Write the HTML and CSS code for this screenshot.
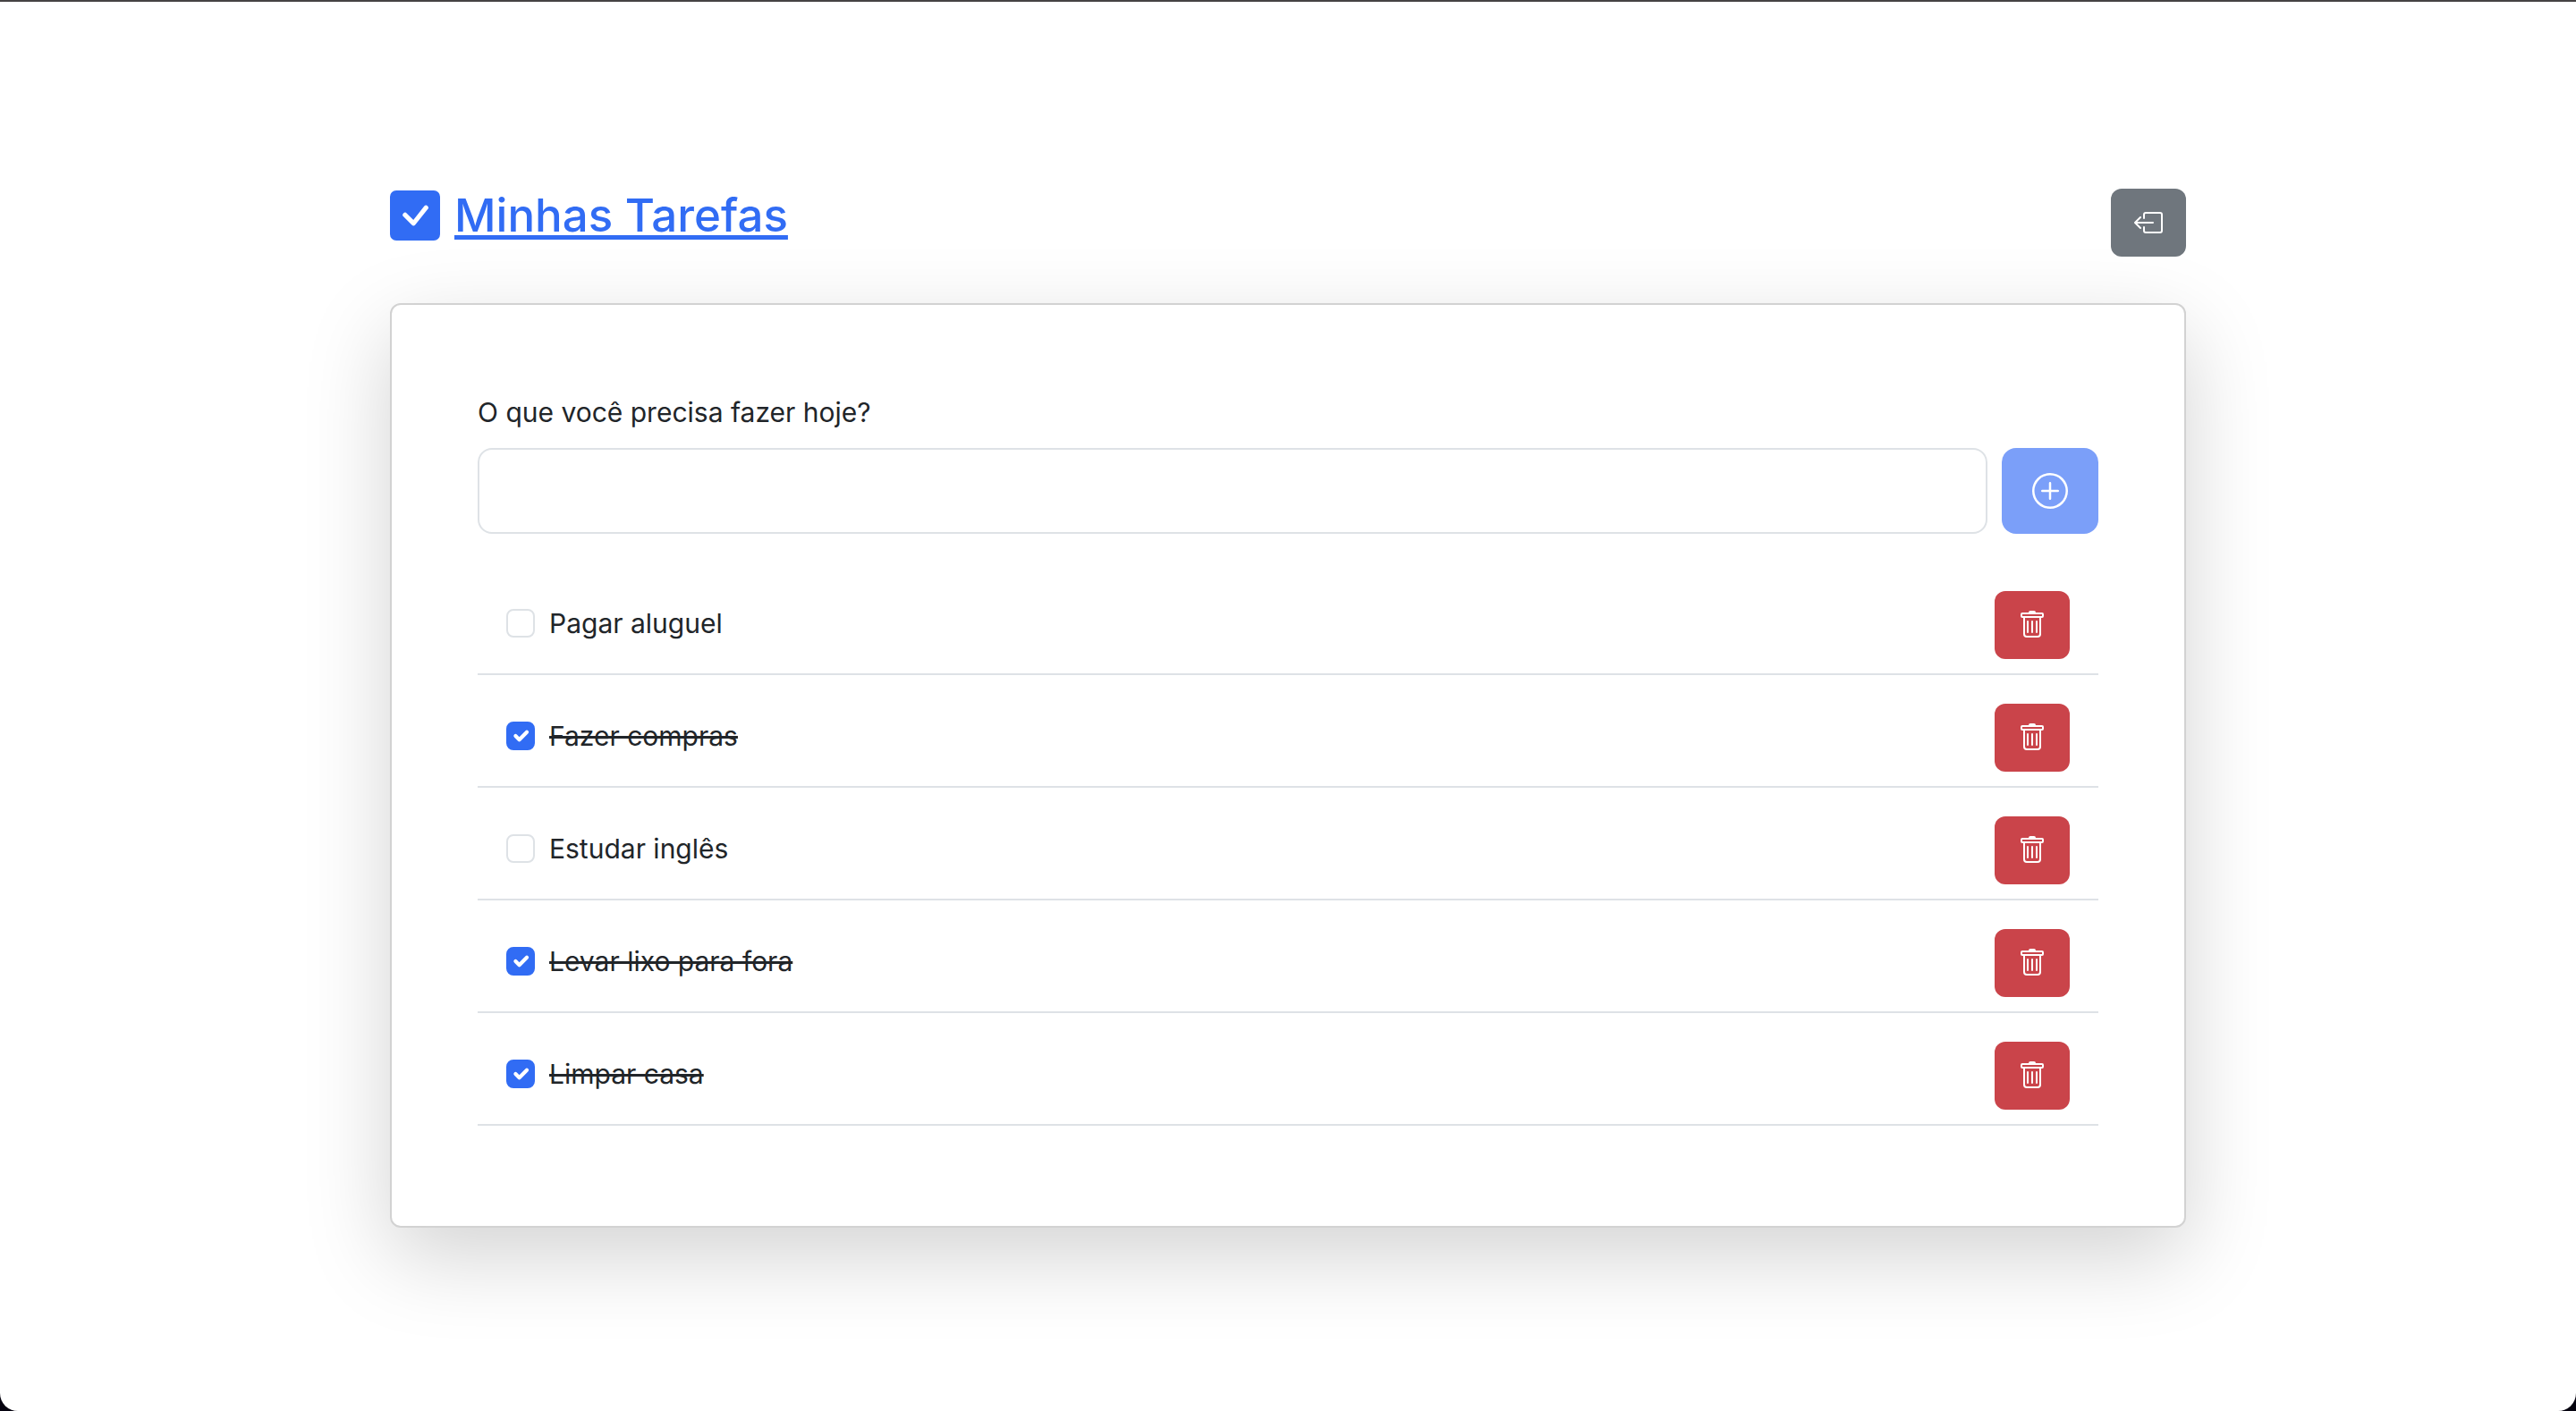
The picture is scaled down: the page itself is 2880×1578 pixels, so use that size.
FILE: index.html
```html
<!DOCTYPE html>
<html lang="pt-BR">
<head>
<meta charset="utf-8">
<title>Minhas Tarefas</title>
<meta name="viewport" content="width=device-width, initial-scale=1">
<link rel="stylesheet" href="styles.css">
</head>
<body>
<svg class="sprite" aria-hidden="true">
  <symbol id="trash" viewBox="0 0 16 16">
    <path d="M5.5 5.5A.5.5 0 0 1 6 6v6a.5.5 0 0 1-1 0V6a.5.5 0 0 1 .5-.5m2.5 0a.5.5 0 0 1 .5.5v6a.5.5 0 0 1-1 0V6a.5.5 0 0 1 .5-.5m3 .5a.5.5 0 0 0-1 0v6a.5.5 0 0 0 1 0z"/>
    <path d="M14.5 3a1 1 0 0 1-1 1H13v9a2 2 0 0 1-2 2H5a2 2 0 0 1-2-2V4h-.5a1 1 0 0 1-1-1V2a1 1 0 0 1 1-1H6a1 1 0 0 1 1-1h2a1 1 0 0 1 1 1h3.5a1 1 0 0 1 1 1zM4.118 4 4 4.059V13a1 1 0 0 0 1 1h6a1 1 0 0 0 1-1V4.059L11.882 4zM2.5 3h11V2h-11z"/>
  </symbol>
</svg>
<div class="page">
  <main class="container">
    <header class="header">
      <h1 class="title">
        <a class="title-link" href="#">
          <svg class="title-icon" viewBox="0 0 16 16" aria-hidden="true"><path d="M2 0a2 2 0 0 0-2 2v12a2 2 0 0 0 2 2h12a2 2 0 0 0 2-2V2a2 2 0 0 0-2-2zm10.03 4.97a.75.75 0 0 1 .011 1.05l-3.992 4.99a.75.75 0 0 1-1.08.02L4.324 8.384a.75.75 0 1 1 1.06-1.06l2.094 2.093 3.473-4.425a.75.75 0 0 1 1.08-.022z"/></svg>
          <span class="title-text">Minhas Tarefas</span>
        </a>
      </h1>
      <button class="btn btn-secondary" type="button" aria-label="Sair">
        <svg class="icon" viewBox="0 0 16 16" aria-hidden="true"><path fill-rule="evenodd" d="M6 12.5a.5.5 0 0 0 .5.5h8a.5.5 0 0 0 .5-.5v-9a.5.5 0 0 0-.5-.5h-8a.5.5 0 0 0-.5.5v2a.5.5 0 0 1-1 0v-2A1.5 1.5 0 0 1 6.5 2h8A1.5 1.5 0 0 1 16 3.5v9a1.5 1.5 0 0 1-1.5 1.5h-8A1.5 1.5 0 0 1 5 12.5v-2a.5.5 0 0 1 1 0z"/><path fill-rule="evenodd" d="M.146 8.354a.5.5 0 0 1 0-.708l3-3a.5.5 0 1 1 .708.708L1.707 7.5H10.5a.5.5 0 0 1 0 1H1.707l2.147 2.146a.5.5 0 0 1-.708.708z"/></svg>
      </button>
    </header>

    <section class="card">
      <form class="new-task">
        <label class="label" for="task">O que você precisa fazer hoje?</label>
        <div class="new-task-row">
          <input class="input" id="task" type="text">
          <button class="btn btn-primary" type="submit" aria-label="Adicionar" disabled>
            <svg class="icon-lg" viewBox="0 0 16 16" aria-hidden="true"><path d="M8 15A7 7 0 1 1 8 1a7 7 0 0 1 0 14m0 1A8 8 0 1 0 8 0a8 8 0 0 0 0 16"/><path d="M8 4a.5.5 0 0 1 .5.5v3h3a.5.5 0 0 1 0 1h-3v3a.5.5 0 0 1-1 0v-3h-3a.5.5 0 0 1 0-1h3v-3A.5.5 0 0 1 8 4"/></svg>
          </button>
        </div>
      </form>

      <ul class="tasks">
        <li class="task">
          <div class="check"><input class="checkbox" type="checkbox" id="t1"><label class="task-name" for="t1">Pagar aluguel</label></div>
          <button class="btn btn-danger" type="button" aria-label="Excluir"><svg class="icon" aria-hidden="true"><use href="#trash"/></svg></button>
        </li>
        <li class="task">
          <div class="check"><input class="checkbox" type="checkbox" id="t2" checked><label class="task-name" for="t2">Fazer compras</label></div>
          <button class="btn btn-danger" type="button" aria-label="Excluir"><svg class="icon" aria-hidden="true"><use href="#trash"/></svg></button>
        </li>
        <li class="task">
          <div class="check"><input class="checkbox" type="checkbox" id="t3"><label class="task-name" for="t3">Estudar inglês</label></div>
          <button class="btn btn-danger" type="button" aria-label="Excluir"><svg class="icon" aria-hidden="true"><use href="#trash"/></svg></button>
        </li>
        <li class="task">
          <div class="check"><input class="checkbox" type="checkbox" id="t4" checked><label class="task-name" for="t4">Levar lixo para fora</label></div>
          <button class="btn btn-danger" type="button" aria-label="Excluir"><svg class="icon" aria-hidden="true"><use href="#trash"/></svg></button>
        </li>
        <li class="task">
          <div class="check"><input class="checkbox" type="checkbox" id="t5" checked><label class="task-name" for="t5">Limpar casa</label></div>
          <button class="btn btn-danger" type="button" aria-label="Excluir"><svg class="icon" aria-hidden="true"><use href="#trash"/></svg></button>
        </li>
      </ul>
    </section>
  </main>
</div>
</body>
</html>
```
FILE: styles.css
```css
*, *::before, *::after { box-sizing: border-box; }

html { background: #05030f; }

body {
  margin: 0;
  font-family: Inter, "Liberation Sans", sans-serif;
  font-size: 30px;
  line-height: 48px;
  color: #212529;
}

.sprite { display: none; }

.page {
  min-height: 100vh;
  padding: 209px 48px 96px;
  background: #fff;
  border-top: 2px solid #454243;
  border-radius: 0 0 20px 20px;
  overflow: hidden;
}

.container {
  max-width: 2008px;
  margin: 0 auto;
}

.header {
  display: flex;
  justify-content: space-between;
  align-items: flex-start;
  margin-bottom: 52px;
}

.title {
  margin: 0;
  font-size: 51px;
  font-weight: 500;
  line-height: 60px;
}

.title-link {
  display: flex;
  align-items: center;
  gap: 16px;
  color: #316cf4;
  text-decoration: none;
}

.title-icon {
  width: 56px;
  height: 56px;
  fill: currentColor;
}

.title-text {
  text-decoration: underline;
  text-decoration-thickness: 5px;
  text-underline-offset: 4px;
  text-decoration-skip-ink: none;
}

.btn {
  display: inline-flex;
  align-items: center;
  justify-content: center;
  padding: 22px 26px;
  border: 0;
  border-radius: 12px;
  color: #fff;
  cursor: pointer;
}

.btn-secondary { background: #6f767d; }
.btn-danger { background: #ca444a; }

.btn-primary {
  padding: 28px 34px;
  border-radius: 16px;
  background: #316cf4;
}

.btn-primary:disabled { background: #7b9ff9; cursor: default; }

.icon {
  width: 32px;
  height: 32px;
  fill: currentColor;
}

.icon-lg {
  width: 40px;
  height: 40px;
  fill: currentColor;
}

.card {
  padding: 96px;
  background: #fff;
  border: 2px solid #d2d2d2;
  border-radius: 12px;
  box-shadow: 0 32px 96px rgba(0, 0, 0, .175);
}

.label {
  display: block;
  margin-bottom: 16px;
}

.new-task-row {
  display: flex;
  gap: 16px;
}

.input {
  flex: 1;
  min-width: 0;
  height: 96px;
  padding: 16px 32px;
  border: 2px solid #dee2e6;
  border-radius: 16px;
  background: #fff;
  color: inherit;
  font: inherit;
}

.tasks {
  margin: 32px 0 16px;
  padding: 0;
  list-style: none;
}

.task {
  display: flex;
  justify-content: space-between;
  align-items: center;
  padding: 32px 32px 16px;
  border-bottom: 2px solid #dee2e6;
}

.check {
  display: flex;
  align-items: center;
  gap: 16px;
  margin-bottom: 4px;
}

.checkbox {
  appearance: none;
  width: 32px;
  height: 32px;
  margin: 0;
  border: 2px solid #dee2e6;
  border-radius: 8px;
  background: #fff center / contain no-repeat;
}

.checkbox:checked {
  border-color: #316cf4;
  background-color: #316cf4;
  background-image: url("data:image/svg+xml,%3Csvg xmlns='http://www.w3.org/2000/svg' viewBox='0 0 20 20'%3E%3Cpath fill='none' stroke='%23fff' stroke-linecap='round' stroke-linejoin='round' stroke-width='3' d='m6 10 3 3 6-6'/%3E%3C/svg%3E");
}

.checkbox:checked + .task-name {
  text-decoration: line-through;
  text-decoration-thickness: 3px;
}
```
